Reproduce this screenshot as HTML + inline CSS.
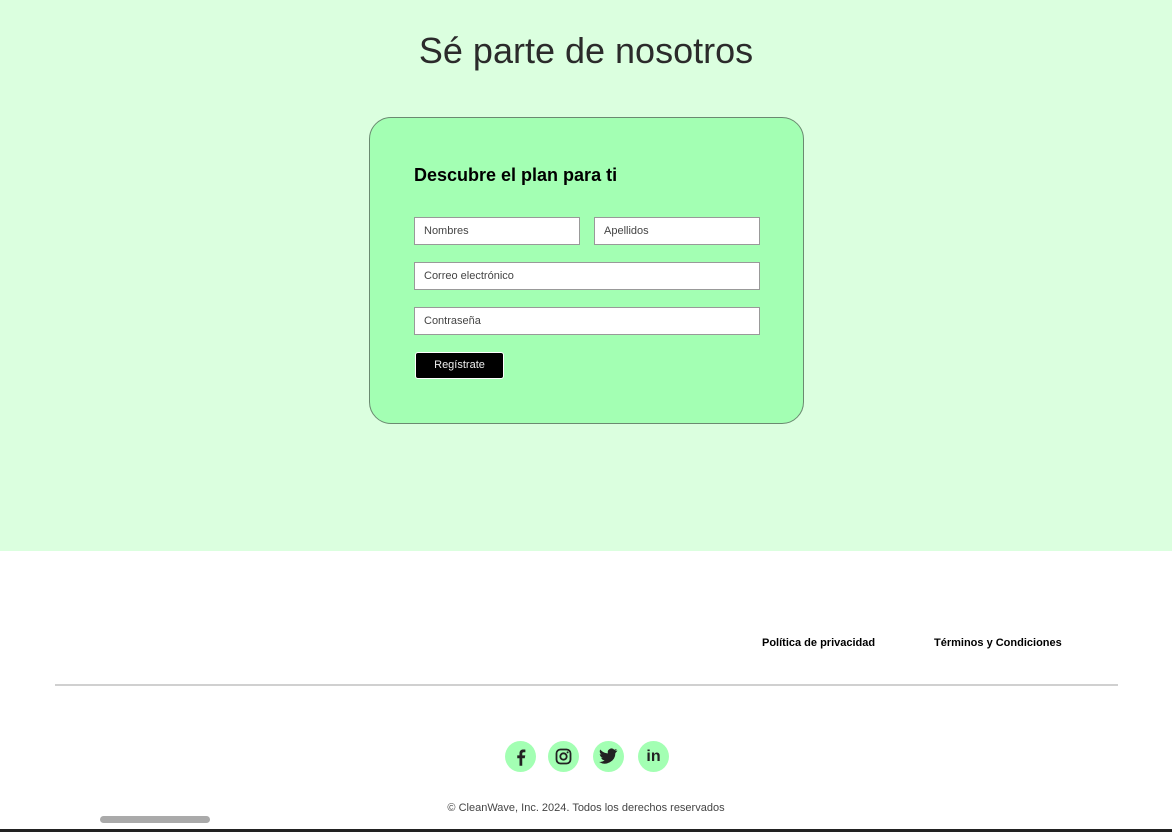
<!DOCTYPE html>
<html><head><meta charset="utf-8"><style>
*{box-sizing:border-box;margin:0;padding:0}
body{width:1172px;height:832px;overflow:hidden;background:#fff;font-family:"Liberation Sans",sans-serif;position:relative}
.top{position:absolute;left:0;top:0;width:1172px;height:551px;background:#dbffdf}
h1{position:absolute;top:30px;width:100%;text-align:center;font-weight:400;font-size:36px;color:#2b2b2b}
.card{position:absolute;left:369px;top:117px;width:435px;height:307px;background:#a3ffb3;border:1px solid #6a8a70;border-radius:22px}
.card h2{position:absolute;left:44px;top:47px;font-size:18px;font-weight:700;color:#000}
.in{position:absolute;height:28px;background:#fff;border:1px solid #999;font-size:11px;color:#444;padding-left:9px;line-height:26px}
.btn{position:absolute;left:45px;top:234px;width:89px;height:27px;background:#000;border-radius:3px;color:#eee;font-size:11px;text-align:center;line-height:25px;border:1px solid #fff}
.link{position:absolute;top:637px;font-size:11px;font-weight:700;color:#000}
.hr{position:absolute;left:55px;top:684px;width:1063px;height:2px;background:#d0d0d0}
.ic{position:absolute;top:741px;width:31px;height:31px;border-radius:50%;background:#a3ffb3;display:flex;align-items:center;justify-content:center}
.copy{position:absolute;top:802px;width:100%;text-align:center;font-size:11px;color:#444}
.sb{position:absolute;left:100px;top:816px;width:110px;height:7px;border-radius:4px;background:#aaa}
.bot{position:absolute;left:0;top:829px;width:1172px;height:3px;background:#222}
</style></head><body>
<div class="top">
<h1>Sé parte de nosotros</h1>
<div class="card">
<h2>Descubre el plan para ti</h2>
<div class="in" style="left:44px;top:99px;width:166px">Nombres</div>
<div class="in" style="left:224px;top:99px;width:166px">Apellidos</div>
<div class="in" style="left:44px;top:144px;width:346px">Correo electrónico</div>
<div class="in" style="left:44px;top:189px;width:346px">Contraseña</div>
<div class="btn">Regístrate</div>
</div>
</div>
<div class="link" style="left:762px">Política de privacidad</div>
<div class="link" style="left:934px">Términos y Condiciones</div>
<div class="hr"></div>
<div class="ic" style="left:505px"><svg width="20" height="20" viewBox="0 0 16 16"><path d="M9 15V9h2l.4-2.3H9V5.3c0-.7.3-1.1 1.2-1.1h1.3V2.1C11.1 2 10.4 2 9.8 2 8 2 6.8 3 6.8 5v1.7H5V9h1.8v6z" fill="#222"/></svg></div>
<div class="ic" style="left:548px"><svg width="17" height="17" viewBox="0 0 17 17"><rect x="1.5" y="1.5" width="14" height="14" rx="4" fill="none" stroke="#222" stroke-width="1.8"/><circle cx="8.5" cy="8.5" r="3.2" fill="none" stroke="#222" stroke-width="1.8"/><circle cx="12.6" cy="4.4" r="1" fill="#222"/></svg></div>
<div class="ic" style="left:593px"><svg width="19" height="17" viewBox="0 0 24 20"><path d="M23 2.3c-.8.4-1.8.6-2.7.7 1-.6 1.700-1.5 2-2.6-.9.5-1.9.9-3 1.1A4.7 4.7 0 0 0 11.3 6C7.4 5.8 4 4 1.6 1.1c-1.3 2.2-.6 4.9 1.5 6.3-.8 0-1.5-.2-2.1-.6 0 2.3 1.6 4.2 3.8 4.6-.7.2-1.4.2-2.1.1.6 1.9 2.4 3.200 4.4 3.3A9.5 9.5 0 0 1 0 16.8 13.4 13.4 0 0 0 20.7 5.5c.9-.7 1.7-1.5 2.3-2.4z" fill="#222"/></svg></div>
<div class="ic" style="left:638px"><span style="font-weight:700;font-size:16px;color:#222">in</span></div>
<div class="copy">© CleanWave, Inc. 2024. Todos los derechos reservados</div>
<div class="sb"></div>
<div class="bot"></div>
</body></html>
